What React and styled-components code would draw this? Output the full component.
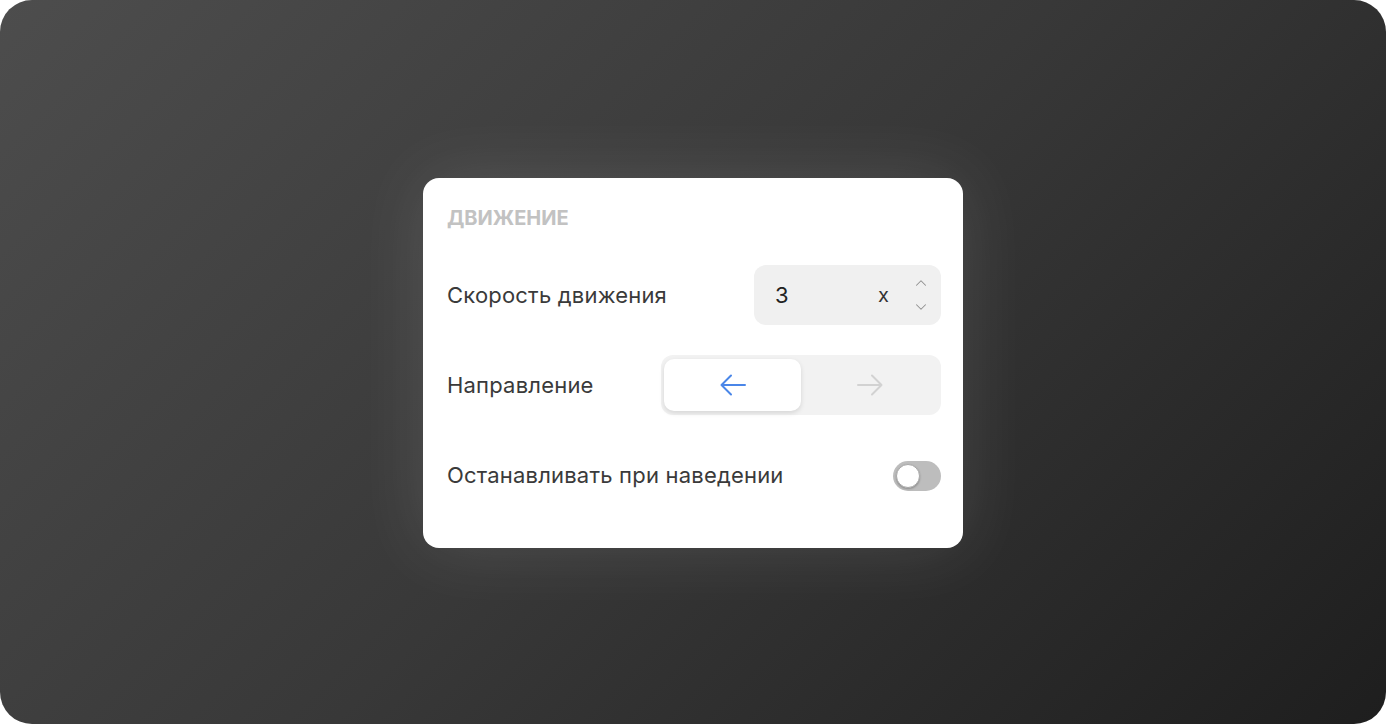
import React, { useState } from 'react';
import styled, { createGlobalStyle } from 'styled-components';
import { ChevronUp, ChevronDown } from 'lucide-react';

const GlobalStyle = createGlobalStyle`
  html, body {
    margin: 0;
    padding: 0;
    background: #ffffff;
  }
  body {
    font-family: Inter, "Noto Sans", sans-serif;
  }
`;

const Backdrop = styled.div`
  width: 1386px;
  height: 724px;
  border-radius: 32px;
  background: linear-gradient(135deg, #4d4d4d 0%, #383838 50%, #1e1e1e 100%);
  display: flex;
  align-items: center;
  justify-content: center;
  overflow: hidden;
`;

const Card = styled.div`
  width: 540px;
  box-sizing: border-box;
  margin-top: 1px;
  padding: 24px 22px 43px 24px;
  background: #ffffff;
  border-radius: 16px;
  box-shadow: 0 0 70px rgba(255, 255, 255, 0.12);
`;

const Title = styled.h3`
  margin: 0 0 31px;
  height: 32px;
  line-height: 32px;
  font-size: 20px;
  font-weight: 700;
  color: #c2c2c2;
`;

const Rows = styled.div`
  display: flex;
  flex-direction: column;
  gap: 30px;
`;

const Row = styled.div`
  display: flex;
  align-items: center;
  justify-content: space-between;
  min-height: 60px;
`;

const Label = styled.span`
  font-size: 22px;
  letter-spacing: 0.2px;
  color: #3a3a3a;
`;

const NumberBox = styled.div`
  width: 187px;
  height: 60px;
  box-sizing: border-box;
  border-radius: 12px;
  background: #f0f0f0;
  display: flex;
  align-items: center;
  padding: 0 11px 0 21px;
`;

const Value = styled.span`
  flex: 1;
  font-size: 22px;
  color: #222;
`;

const Unit = styled.span`
  font-size: 20px;
  color: #333;
  margin-right: 23px;
`;

const Spinner = styled.div`
  display: flex;
  flex-direction: column;
  gap: 6px;
  color: #8f8f8f;
`;

const Segmented = styled.div`
  width: 280px;
  height: 60px;
  box-sizing: border-box;
  padding: 4px 3px;
  border-radius: 12px;
  background: #f2f2f2;
  display: grid;
  grid-template-columns: 1fr 1fr;
`;

const Segment = styled.button`
  border: none;
  border-radius: 10px;
  cursor: pointer;
  display: flex;
  align-items: center;
  justify-content: center;
  background: ${p => (p.$active ? '#ffffff' : 'transparent')};
  box-shadow: ${p => (p.$active ? '0 2px 5px rgba(0,0,0,0.12)' : 'none')};
  color: ${p => (p.$active ? '#4a86e8' : '#d2d2d2')};
`;

const Track = styled.button`
  width: 48px;
  height: 30px;
  padding: 0;
  margin-top: 2px;
  border: none;
  border-radius: 15px;
  background: ${p => (p.$on ? '#4a86e8' : '#bdbdbd')};
  display: flex;
  align-items: center;
  justify-content: ${p => (p.$on ? 'flex-end' : 'flex-start')};
  cursor: pointer;
`;

const Knob = styled.span`
  width: 24px;
  height: 24px;
  margin: 0 3px;
  box-sizing: border-box;
  border-radius: 50%;
  background: #ffffff;
  border: 1px solid #a8a8a8;
  box-shadow: 0 1px 2px rgba(0, 0, 0, 0.25);
`;

const Arrow = ({ dir }) => (
  <svg width="26" height="22" viewBox="0 0 26 22" fill="none" stroke="currentColor" strokeWidth="2" strokeLinecap="round" strokeLinejoin="round">
    {dir === 'left' ? (
      <path d="M25 11H1.5M11 1.5L1.5 11l9.5 9.5" />
    ) : (
      <path d="M1 11h23.5M15 1.5l9.5 9.5-9.5 9.5" />
    )}
  </svg>
);

export default function App() {
  const [dir, setDir] = useState('left');
  const [pause, setPause] = useState(false);

  return (
    <>
      <GlobalStyle />
      <Backdrop>
        <Card>
          <Title>ДВИЖЕНИЕ</Title>
          <Rows>
            <Row>
              <Label>Скорость движения</Label>
              <NumberBox>
                <Value>3</Value>
                <Unit>x</Unit>
                <Spinner>
                  <ChevronUp size={18} strokeWidth={1.4} />
                  <ChevronDown size={18} strokeWidth={1.4} />
                </Spinner>
              </NumberBox>
            </Row>
            <Row>
              <Label>Направление</Label>
              <Segmented>
                <Segment $active={dir === 'left'} onClick={() => setDir('left')}>
                  <Arrow dir="left" />
                </Segment>
                <Segment $active={dir === 'right'} onClick={() => setDir('right')}>
                  <Arrow dir="right" />
                </Segment>
              </Segmented>
            </Row>
            <Row>
              <Label>Останавливать при наведении</Label>
              <Track $on={pause} onClick={() => setPause(!pause)}>
                <Knob />
              </Track>
            </Row>
          </Rows>
        </Card>
      </Backdrop>
    </>
  );
}
